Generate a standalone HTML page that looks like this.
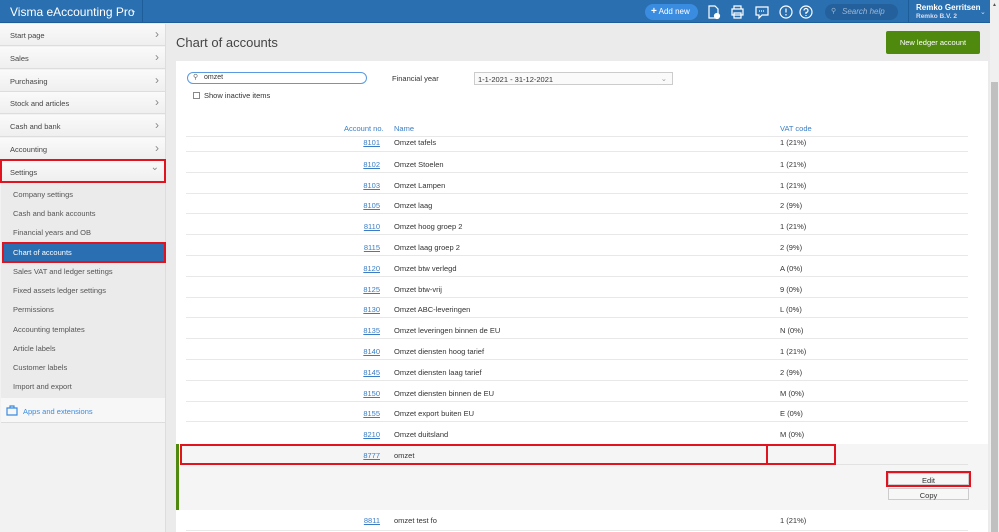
<!DOCTYPE html>
<html><head><meta charset="utf-8"><style>
*{box-sizing:border-box;margin:0;padding:0}
body{width:999px;height:532px;overflow:hidden;background:#ebebeb;font-family:"Liberation Sans",sans-serif;font-size:7.5px;color:#333;position:relative}
.a{position:absolute}
.top{left:0;top:0;width:990px;height:23px;background:#2a6fb0;border-bottom:1px solid #1d5d9a}
.side{left:0;top:24px;width:166px;height:508px;background:#f2f2f2;border-right:1px solid #ddd}
.it{position:absolute;left:0;width:165px;height:22px;background:linear-gradient(#fafafa,#efefef);border-bottom:1px solid #ddd;padding:7px 0 0 10px;color:#444}
.it::after{content:"›";position:absolute;right:6px;top:3px;font-size:12px;color:#888}
.it.open::after{content:"⌄";top:2px;font-size:10px}
.sub{position:absolute;left:13px;color:#555}
.row{position:absolute;left:186px;width:782px;height:21px;border-bottom:1px solid #e8e8e8}
.row .n{position:absolute;right:588px;top:8px;color:#3b7dc4;text-decoration:underline}
.row .m{position:absolute;left:208px;top:8px}
.row .v{position:absolute;left:594px;top:8px}
.red{position:absolute;border:2px solid #e0131f}
svg{position:absolute}
</style></head><body>
<div class="a top"></div>
<div class="a" style="left:10px;top:5px;color:#fff;font-size:12px">Visma eAccounting Pro</div>
<div class="a" style="left:130px;top:6px;color:#cde;font-size:8px">⌄</div>
<div class="a" style="left:142px;top:0;width:1px;height:23px;background:#1d5d9a"></div>
<div class="a" style="left:645px;top:4px;width:53px;height:16px;border-radius:8px;background:#3a8ce0;color:#fff;font-size:8px;padding:3px 0 0 6px"><b style="font-size:10px;line-height:8px">+</b> Add new</div>
<svg style="left:706px;top:4px" width="110" height="16" fill="none" stroke="#fff" stroke-width="1.2">
<path d="M3 2h6l3 3v9H3z"/><circle cx="11" cy="12" r="2.5" fill="#fff"/>
<path d="M28 5V2h7v3M26 5h11v6H26zM28 9h7v5h-7z"/>
<path d="M50 3h12v8h-6l-3 3v-3h-3z"/><path d="M53 7h6" stroke-dasharray="1 1"/>
<circle cx="80" cy="8" r="6"/><path d="M80 4.5v4M80 10v1.5"/>
<circle cx="100" cy="8" r="6"/><path d="M98 6.5a2 2 0 1 1 2 2v1.5M100 11v1"/>
</svg>
<div class="a" style="left:825px;top:4px;width:73px;height:16px;border-radius:8px;background:#24609c;color:#9bb8d8;font-style:italic;font-size:8px;padding:3px 0 0 17px">Search help</div>
<div class="a" style="left:831px;top:7px;color:#9bb8d8;font-size:7px">⚲</div>
<div class="a" style="left:908px;top:0;width:1px;height:23px;background:#1d5d9a"></div>
<div class="a" style="left:916px;top:3px;color:#fff;font-size:8px;font-weight:bold">Remko Gerritsen</div>
<div class="a" style="left:916px;top:13px;color:#dde;font-size:6.5px;font-weight:bold">Remko B.V. 2</div>
<div class="a" style="left:980px;top:8px;color:#dde;font-size:7px">⌄</div>
<div class="a" style="left:990px;top:0;width:9px;height:532px;background:#f0f0f0"></div>
<div class="a" style="left:991px;top:82px;width:7px;height:450px;background:#c0c0c0"></div>
<div class="a" style="left:992px;top:2px;font-size:5px;color:#555">▲</div>

<div class="a side"></div>
<div class="it" style="top:24px">Start page</div>
<div class="it" style="top:47px">Sales</div>
<div class="it" style="top:70px">Purchasing</div>
<div class="it" style="top:92px">Stock and articles</div>
<div class="it" style="top:115px">Cash and bank</div>
<div class="it" style="top:138px">Accounting</div>
<div class="it open" style="top:160px;padding-top:8px">Settings</div>
<div class="red" style="left:0;top:159px;width:166px;height:24px"></div>
<div class="a" style="left:1px;top:183px;width:164px;height:215px;background:#ebebeb"></div>
<div class="sub" style="top:190px">Company settings</div>
<div class="sub" style="top:209px">Cash and bank accounts</div>
<div class="sub" style="top:228px">Financial years and OB</div>
<div class="a" style="left:2px;top:242px;width:164px;height:21px;background:#2b6fb3;border:2px solid #e0131f"></div>
<div class="sub" style="top:248px;color:#fff">Chart of accounts</div>
<div class="sub" style="top:267px">Sales VAT and ledger settings</div>
<div class="sub" style="top:286px">Fixed assets ledger settings</div>
<div class="sub" style="top:305px">Permissions</div>
<div class="sub" style="top:325px">Accounting templates</div>
<div class="sub" style="top:344px">Article labels</div>
<div class="sub" style="top:363px">Customer labels</div>
<div class="sub" style="top:382px">Import and export</div>
<div class="a" style="left:1px;top:398px;width:164px;height:25px;background:#f7f7f7;border-bottom:1px solid #ddd"></div>
<svg style="left:6px;top:404px" width="12" height="12" fill="none" stroke="#3a8ce0" stroke-width="1.2"><path d="M1 4h10v7H1zM4 4V2h4v2"/></svg>
<div class="a" style="left:23px;top:407px;color:#3a8ce0">Apps and extensions</div>

<div class="a" style="left:176px;top:35px;font-size:13px;color:#444">Chart of accounts</div>
<div class="a" style="left:886px;top:31px;width:94px;height:23px;background:#4f8a0f;border-radius:2px;color:#fff;padding-top:7px;text-align:center;font-size:7.5px">New ledger account</div>
<div class="a" style="left:176px;top:61px;width:812px;height:471px;background:#fff"></div>
<div class="a" style="left:187px;top:72px;width:180px;height:12px;border:1px solid #5a9ae0;border-radius:6px;padding:1px 0 0 16px;font-size:7px">omzet</div>
<div class="a" style="left:193px;top:73px;font-size:7px;color:#666">⚲</div>
<div class="a" style="left:193px;top:92px;width:7px;height:7px;border:1px solid #888"></div>
<div class="a" style="left:204px;top:91px">Show inactive items</div>
<div class="a" style="left:392px;top:74px">Financial year</div>
<div class="a" style="left:474px;top:72px;width:199px;height:13px;border:1px solid #ccc;background:#fafafa;padding:2px 0 0 3px">1-1-2021 - 31-12-2021<span style="position:absolute;right:5px;top:1px;color:#999">⌄</span></div>
<div class="a" style="left:344px;top:124px;color:#3b7dc4">Account no.</div>
<div class="a" style="left:394px;top:124px;color:#3b7dc4">Name</div>
<div class="a" style="left:780px;top:124px;color:#3b7dc4">VAT code</div>
<div class="a" style="left:186px;top:136px;width:782px;height:1px;background:#e8e8e8"></div>

<div class="row" style="top:131px;height:21px"><span class="n" style="top:7px">8101</span><span class="m" style="top:7px">Omzet tafels</span><span class="v" style="top:7px">1 (21%)</span></div>
<div class="row" style="top:152px"><span class="n">8102</span><span class="m">Omzet Stoelen</span><span class="v">1 (21%)</span></div>
<div class="row" style="top:173px"><span class="n">8103</span><span class="m">Omzet Lampen</span><span class="v">1 (21%)</span></div>
<div class="row" style="top:193px"><span class="n">8105</span><span class="m">Omzet laag</span><span class="v">2 (9%)</span></div>
<div class="row" style="top:214px"><span class="n">8110</span><span class="m">Omzet hoog groep 2</span><span class="v">1 (21%)</span></div>
<div class="row" style="top:235px"><span class="n">8115</span><span class="m">Omzet laag groep 2</span><span class="v">2 (9%)</span></div>
<div class="row" style="top:256px"><span class="n">8120</span><span class="m">Omzet btw verlegd</span><span class="v">A (0%)</span></div>
<div class="row" style="top:277px"><span class="n">8125</span><span class="m">Omzet btw-vrij</span><span class="v">9 (0%)</span></div>
<div class="row" style="top:297px"><span class="n">8130</span><span class="m">Omzet ABC-leveringen</span><span class="v">L (0%)</span></div>
<div class="row" style="top:318px"><span class="n">8135</span><span class="m">Omzet leveringen binnen de EU</span><span class="v">N (0%)</span></div>
<div class="row" style="top:339px"><span class="n">8140</span><span class="m">Omzet diensten hoog tarief</span><span class="v">1 (21%)</span></div>
<div class="row" style="top:360px"><span class="n">8145</span><span class="m">Omzet diensten laag tarief</span><span class="v">2 (9%)</span></div>
<div class="row" style="top:381px"><span class="n">8150</span><span class="m">Omzet diensten binnen de EU</span><span class="v">M (0%)</span></div>
<div class="row" style="top:401px"><span class="n">8155</span><span class="m">Omzet export buiten EU</span><span class="v">E (0%)</span></div>
<div class="row" style="top:422px;border:none"><span class="n">8210</span><span class="m">Omzet duitsland</span><span class="v">M (0%)</span></div>

<div class="a" style="left:176px;top:444px;width:812px;height:66px;background:#f5f5f5;border-left:3px solid #4f8a0f"></div>
<div class="a" style="left:186px;top:464px;width:782px;height:1px;background:#e2e2e2"></div>
<div class="row" style="top:444px;border:none"><span class="n" style="top:7px">8777</span><span class="m" style="top:7px">omzet</span></div>
<div class="red" style="left:180px;top:444px;width:656px;height:21px"></div>
<div class="a" style="left:766px;top:444px;width:2px;height:21px;background:#e0131f"></div>
<div class="a" style="left:888px;top:473px;width:81px;height:12px;background:#f7f7f7;border:1px solid #ccc;text-align:center;padding-top:2px">Edit</div>
<div class="red" style="left:886px;top:471px;width:85px;height:16px"></div>
<div class="a" style="left:888px;top:488px;width:81px;height:12px;background:#f7f7f7;border:1px solid #ccc;text-align:center;padding-top:2px">Copy</div>
<div class="row" style="top:510px"><span class="n" style="top:6px">8811</span><span class="m" style="top:6px">omzet test fo</span><span class="v" style="top:6px">1 (21%)</span></div>
</body></html>
